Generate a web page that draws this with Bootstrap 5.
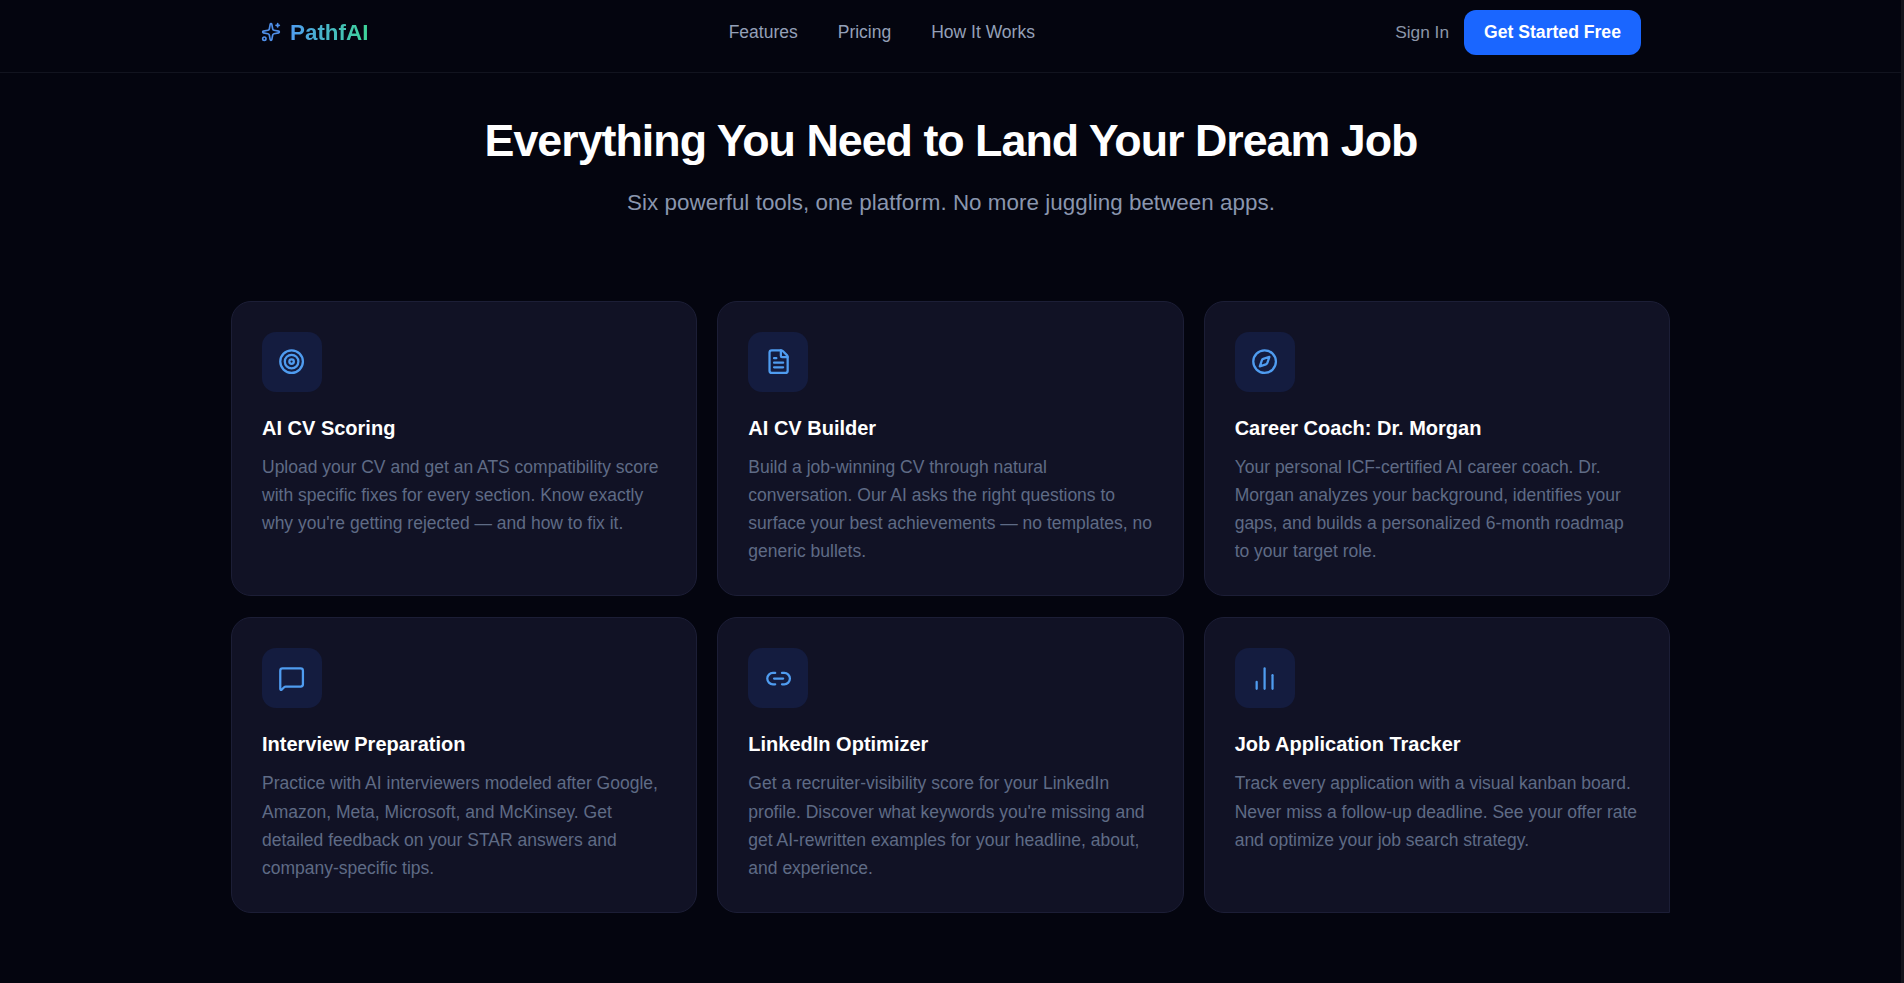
<!DOCTYPE html>
<html lang="en">
<head>
<meta charset="utf-8">
<title>PathfAI</title>
<link href="https://cdn.jsdelivr.net/npm/bootstrap@5.3.0/dist/css/bootstrap.min.css" rel="stylesheet">
<style>
html,body{background:#04050f;}
body{font-family:"Liberation Sans",Arial,sans-serif;color:#fff;min-height:983px;border-right:3px solid #13131b;}
.top-bar{height:73px;border-bottom:1px solid #12141f;background:#04050f;padding-bottom:7px;}
.top-inner{max-width:1381px;height:100%;margin:0 auto;padding-left:1px;}
.brand-link{gap:9px;}
.brand-name{font-size:22.4px;font-weight:700;background:linear-gradient(90deg,#4f9cf0,#3ed598);-webkit-background-clip:text;background-clip:text;color:transparent;}
.top-links{gap:40px;}
.top-links a{color:#94a0b8;text-decoration:none;font-size:17.5px;}
.signin{color:#8b95a8;font-size:17.3px;text-decoration:none;}
.right-group{gap:15px;}
.cta{background:#1a66ff;color:#fff;font-weight:700;font-size:17.6px;border:0;border-radius:12px;height:45px;width:177px;padding:0;display:flex;align-items:center;justify-content:center;}
.hero{padding-top:40.5px;padding-left:1px;}
.hero h2{font-size:44.8px;font-weight:700;line-height:1.2;margin:0;color:#fff;letter-spacing:-1px;}
.hero p{font-size:22.4px;color:#8a96ae;margin:19px 0 0;line-height:1.5;letter-spacing:.03px;}
.feature-grid{display:grid;grid-template-columns:repeat(3,1fr);gap:21px 20px;max-width:1439px;margin:81px auto 0;}
.feature{background:#111225;border:1px solid #1c1e36;border-radius:20px;padding:30px;height:295.6px;}
.feature.cut{border-bottom-right-radius:0;}
.ico{width:60px;height:60px;border-radius:14px;background:#141c3f;color:#4f9cf0;display:flex;align-items:center;justify-content:center;margin-bottom:24px;}
.ico svg{width:27.2px;height:27.2px;fill:none;stroke:currentColor;stroke-width:2;stroke-linecap:round;stroke-linejoin:round;}
.feature h3{font-size:20px;font-weight:700;color:#fff;margin:0 0 13px;line-height:1.2;}
.feature p{font-size:17.5px;line-height:28.16px;color:#5f6b85;margin:0;}
</style>
</head>
<body>
<nav class="top-bar">
  <div class="top-inner d-flex align-items-center justify-content-between">
    <a class="brand-link d-flex align-items-center text-decoration-none" href="#">
      <svg width="20" height="20" viewBox="0 0 24 24" fill="none" stroke="#4f8fe8" stroke-width="2" stroke-linecap="round" stroke-linejoin="round"><path d="M11.017 2.814a1 1 0 0 1 1.966 0l1.051 5.558a2 2 0 0 0 1.594 1.594l5.558 1.051a1 1 0 0 1 0 1.966l-5.558 1.051a2 2 0 0 0-1.594 1.594l-1.051 5.558a1 1 0 0 1-1.966 0l-1.051-5.558a2 2 0 0 0-1.594-1.594l-5.558-1.051a1 1 0 0 1 0-1.966l5.558-1.051a2 2 0 0 0 1.594-1.594z"/><path d="M20 2v4"/><path d="M22 4h-4"/><circle cx="4" cy="20" r="2"/></svg>
      <span class="brand-name">PathfAI</span>
    </a>
    <div class="d-flex top-links">
      <a href="#">Features</a><a href="#">Pricing</a><a href="#">How It Works</a>
    </div>
    <div class="d-flex align-items-center right-group">
      <a class="signin" href="#">Sign In</a>
      <button class="cta" type="button">Get Started Free</button>
    </div>
  </div>
</nav>
<section class="hero text-center">
  <h2>Everything You Need to Land Your Dream Job</h2>
  <p>Six powerful tools, one platform. No more juggling between apps.</p>
</section>
<section class="feature-grid">
  <div class="feature">
    <div class="ico"><svg viewBox="0 0 24 24"><circle cx="12" cy="12" r="10"/><circle cx="12" cy="12" r="6"/><circle cx="12" cy="12" r="2"/></svg></div>
    <h3>AI CV Scoring</h3>
    <p>Upload your CV and get an ATS compatibility score with specific fixes for every section. Know exactly why you're getting rejected — and how to fix it.</p>
  </div>
  <div class="feature">
    <div class="ico"><svg viewBox="0 0 24 24"><path d="M6 22a2 2 0 0 1-2-2V4a2 2 0 0 1 2-2h8a2.4 2.4 0 0 1 1.704.706l3.588 3.588A2.4 2.4 0 0 1 20 8v12a2 2 0 0 1-2 2z"/><path d="M14 2v5a1 1 0 0 0 1 1h5"/><path d="M10 9H8"/><path d="M16 13H8"/><path d="M16 17H8"/></svg></div>
    <h3>AI CV Builder</h3>
    <p>Build a job-winning CV through natural conversation. Our AI asks the right questions to surface your best achievements — no templates, no generic bullets.</p>
  </div>
  <div class="feature">
    <div class="ico"><svg viewBox="0 0 24 24"><circle cx="12" cy="12" r="10"/><path d="m16.24 7.76-1.804 5.411a2 2 0 0 1-1.265 1.265L7.76 16.24l1.804-5.411a2 2 0 0 1 1.265-1.265z"/></svg></div>
    <h3>Career Coach: Dr. Morgan</h3>
    <p>Your personal ICF-certified AI career coach. Dr. Morgan analyzes your background, identifies your gaps, and builds a personalized 6-month roadmap to your target role.</p>
  </div>
  <div class="feature">
    <div class="ico"><svg viewBox="0 0 24 24"><path d="M22 17a2 2 0 0 1-2 2H6.828a2 2 0 0 0-1.414.586l-2.202 2.202A.71.71 0 0 1 2 21.286V5a2 2 0 0 1 2-2h16a2 2 0 0 1 2 2z"/></svg></div>
    <h3>Interview Preparation</h3>
    <p>Practice with AI interviewers modeled after Google, Amazon, Meta, Microsoft, and McKinsey. Get detailed feedback on your STAR answers and company-specific tips.</p>
  </div>
  <div class="feature">
    <div class="ico"><svg viewBox="0 0 24 24"><path d="M9 17H7A5 5 0 0 1 7 7h2"/><path d="M15 7h2a5 5 0 1 1 0 10h-2"/><path d="M8 12h8"/></svg></div>
    <h3>LinkedIn Optimizer</h3>
    <p>Get a recruiter-visibility score for your LinkedIn profile. Discover what keywords you're missing and get AI-rewritten examples for your headline, about, and experience.</p>
  </div>
  <div class="feature cut">
    <div class="ico"><svg viewBox="0 0 24 24"><path d="M5 21v-6"/><path d="M12 21V3"/><path d="M19 21V9"/></svg></div>
    <h3>Job Application Tracker</h3>
    <p>Track every application with a visual kanban board. Never miss a follow-up deadline. See your offer rate and optimize your job search strategy.</p>
  </div>
</section>
<script src="https://cdn.jsdelivr.net/npm/bootstrap@5.3.0/dist/js/bootstrap.bundle.min.js"></script>
</body>
</html>
